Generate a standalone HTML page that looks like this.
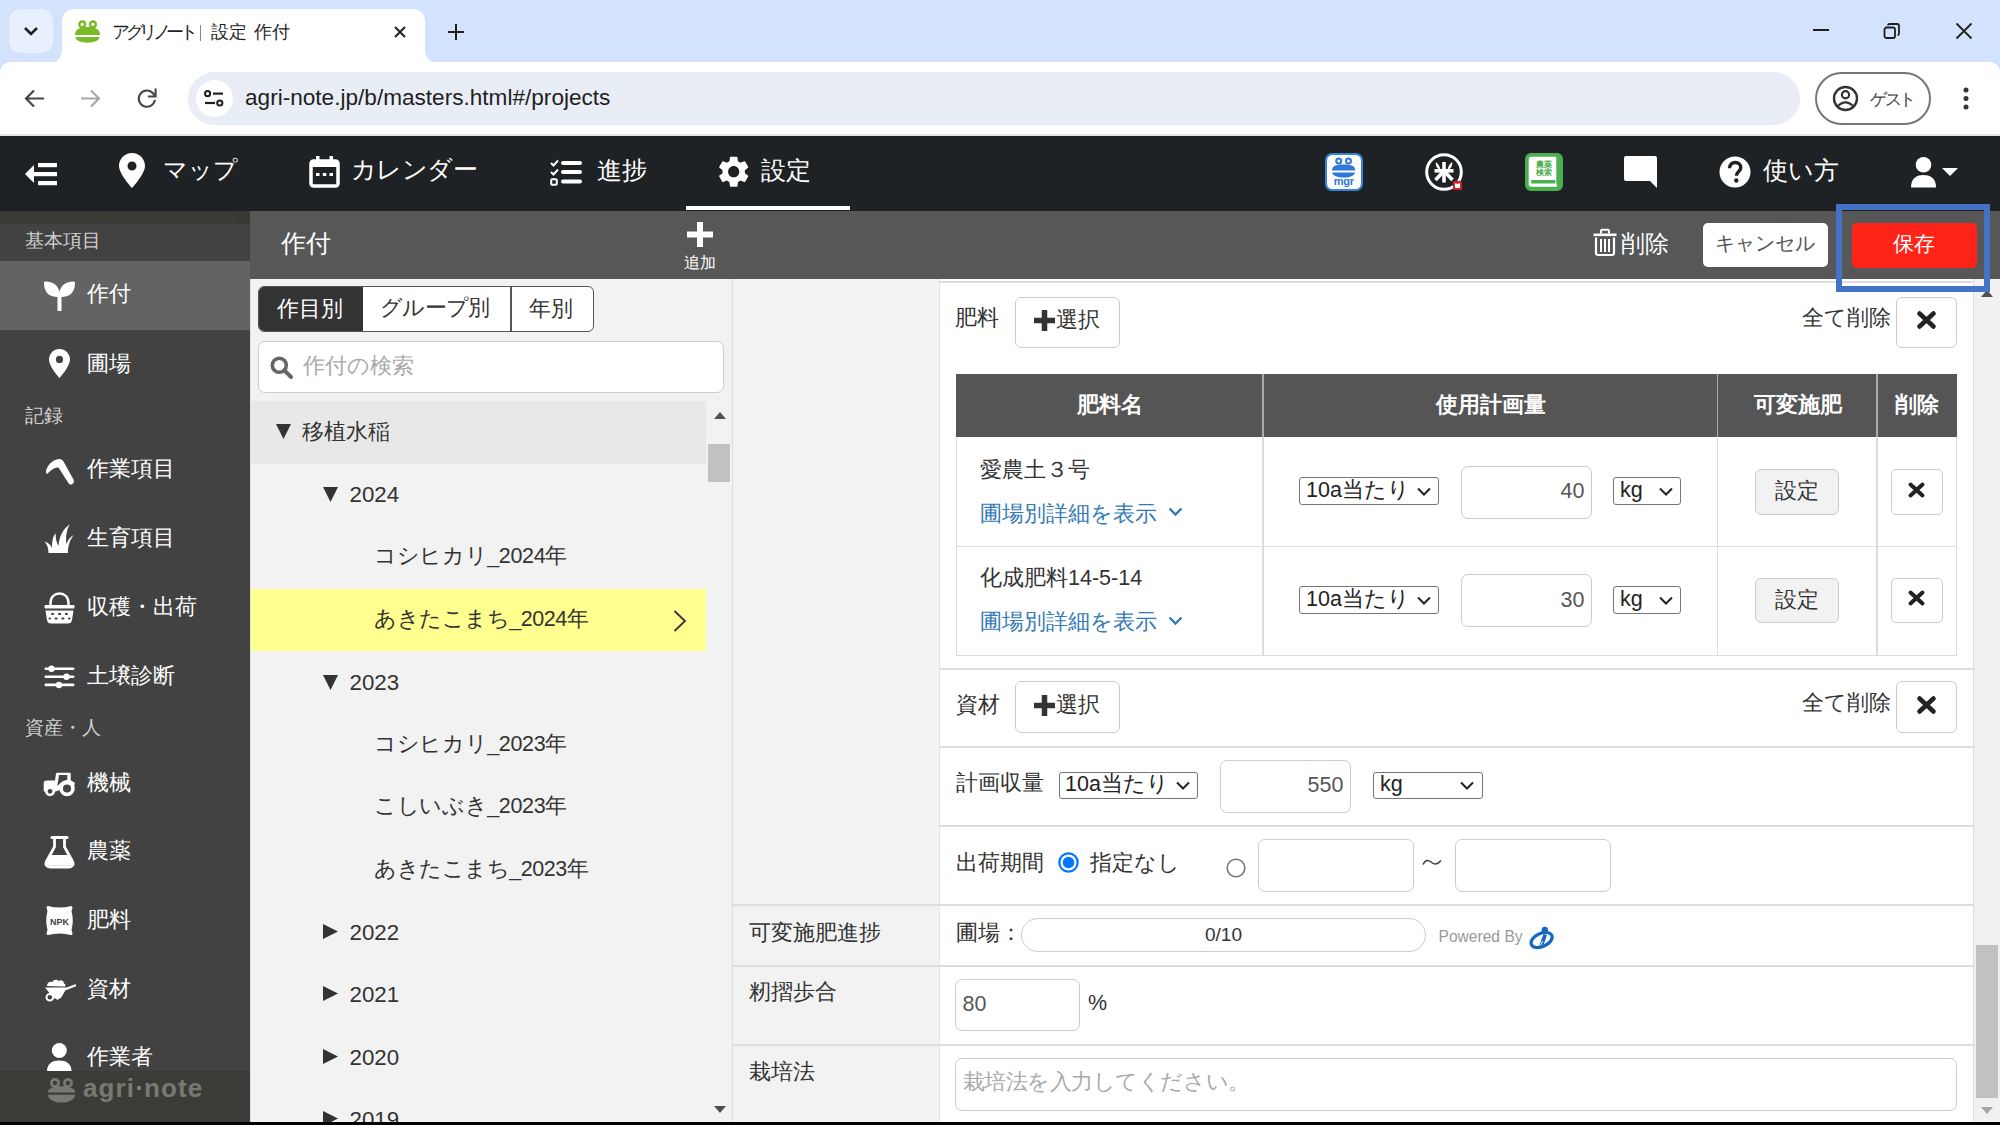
<!DOCTYPE html>
<html lang="ja">
<head>
<meta charset="utf-8">
<style>
*{box-sizing:border-box;margin:0;padding:0}
html,body{width:2000px;height:1125px;overflow:hidden;background:#000}
body{position:relative;font-family:"Liberation Sans",sans-serif;color:#333}
.a{position:absolute}
.t{position:absolute;white-space:nowrap;line-height:1}
svg{position:absolute;overflow:visible}
</style>
</head>
<body>
<!-- ===== CHROME TAB STRIP ===== -->
<div class="a" style="left:0;top:0;width:2000px;height:80px;background:#d3e3fd"></div>
<div class="a" style="left:9px;top:9px;width:44px;height:44px;border-radius:12px;background:#e8f0fd"></div>
<svg style="left:23px;top:25px" width="16" height="12" viewBox="0 0 16 12"><path d="M2 3 L8 9 L14 3" fill="none" stroke="#1f1f1f" stroke-width="2.6"/></svg>
<!-- active tab -->
<div class="a" style="left:62px;top:9px;width:363px;height:54px;background:#fff;border-radius:12px 12px 0 0"></div>
<div class="a" style="left:50px;top:51px;width:12px;height:12px;background:radial-gradient(circle at 0 0,#d3e3fd 11.5px,#fff 12px)"></div>
<div class="a" style="left:425px;top:51px;width:12px;height:12px;background:radial-gradient(circle at 100% 0,#d3e3fd 11.5px,#fff 12px)"></div>
<svg style="left:75px;top:20px" width="25" height="23" viewBox="0 0 25 23">
<circle cx="7.2" cy="4.4" r="2.85" fill="none" stroke="#7aba28" stroke-width="2.4"/>
<circle cx="17.9" cy="4.4" r="2.85" fill="none" stroke="#7aba28" stroke-width="2.4"/>
<path d="M0 14.9 C0 9.5 4 7 12.5 7 C21 7 25 9.5 25 14.9 Z" fill="#7aba28"/>
<path d="M0.3 17.1 L24.7 17.1 C24 21 19 22.7 12.5 22.7 C6 22.7 1 21 0.3 17.1Z" fill="#7aba28"/>
</svg>
<div class="t" style="left:112px;top:24px;font-size:17.5px;color:#1f1f1f;letter-spacing:-4.4px">アグリノート</div>
<div class="a" style="left:199.5px;top:25px;width:1.2px;height:16px;background:#888"></div>
<div class="t" style="left:210.5px;top:24px;font-size:17.5px;color:#1f1f1f">設定</div>
<div class="t" style="left:253.5px;top:24px;font-size:17.5px;color:#1f1f1f">作付</div>
<svg style="left:394px;top:26px" width="12" height="12" viewBox="0 0 12 12"><path d="M1 1L11 11M11 1L1 11" stroke="#1f1f1f" stroke-width="2"/></svg>
<svg style="left:448px;top:24px" width="16" height="16" viewBox="0 0 16 16"><path d="M8 0V16M0 8H16" stroke="#1f1f1f" stroke-width="2"/></svg>
<!-- window controls -->
<div class="a" style="left:1813px;top:29px;width:16px;height:2px;background:#1f1f1f"></div>
<svg style="left:1883px;top:23px" width="18" height="16" viewBox="0 0 18 16"><rect x="1.5" y="4.5" width="10.5" height="10.5" rx="2" fill="none" stroke="#1f1f1f" stroke-width="1.8"/><path d="M5 2.5 Q5 1 6.5 1 L14 1 Q16 1 16 3 L16 10.5 Q16 12 14.5 12" fill="none" stroke="#1f1f1f" stroke-width="1.8"/></svg>
<svg style="left:1956px;top:23px" width="16" height="16" viewBox="0 0 16 16"><path d="M0.5 0.5L15.5 15.5M15.5 0.5L0.5 15.5" stroke="#1f1f1f" stroke-width="1.8"/></svg>

<!-- ===== CHROME TOOLBAR ===== -->
<div class="a" style="left:0;top:62px;width:2000px;height:72px;background:#fff;border-radius:10px 10px 0 0"></div>
<div class="a" style="left:0;top:134px;width:2000px;height:2px;background:#e3e3e3"></div>
<svg style="left:24px;top:89px" width="21" height="19" viewBox="0 0 21 19"><path d="M20 9.5H2.5M10 1.5L2 9.5L10 17.5" fill="none" stroke="#474747" stroke-width="2.2"/></svg>
<svg style="left:80px;top:89px" width="21" height="19" viewBox="0 0 21 19"><path d="M1 9.5H18.5M11 1.5L19 9.5L11 17.5" fill="none" stroke="#a8a8a8" stroke-width="2.2"/></svg>
<svg style="left:137px;top:88px" width="21" height="21" viewBox="0 0 21 21"><path d="M17.9 11.9 A8.1 8.1 0 1 1 15.3 4.6 L18 7.8" fill="none" stroke="#474747" stroke-width="2.1"/><path d="M18.6 1.3 V8.5 H11.8" fill="none" stroke="#474747" stroke-width="2.1" stroke-linecap="round"/></svg>
<div class="a" style="left:188px;top:72px;width:1612px;height:53px;border-radius:27px;background:#e9eef6"></div>
<div class="a" style="left:196px;top:80px;width:37px;height:37px;border-radius:50%;background:#fff"></div>
<svg style="left:204px;top:90px" width="20" height="17" viewBox="0 0 20 17"><circle cx="3.6" cy="3.6" r="2.6" fill="none" stroke="#1f1f1f" stroke-width="2"/><path d="M9 3.6H19" stroke="#1f1f1f" stroke-width="2.2"/><path d="M1 13H11" stroke="#1f1f1f" stroke-width="2.2"/><circle cx="15.8" cy="13" r="2.6" fill="none" stroke="#1f1f1f" stroke-width="2"/></svg>
<div class="t" style="left:245px;top:87px;font-size:22.6px;color:#1f1f1f;letter-spacing:0px" id="url">agri-note.jp/b/masters.html#/projects</div>
<div class="a" style="left:1815px;top:72px;width:116px;height:53px;border-radius:27px;border:2px solid #747775"></div>
<svg style="left:1832px;top:85px" width="27" height="27" viewBox="0 0 27 27"><circle cx="13.5" cy="13.5" r="11.5" fill="none" stroke="#333" stroke-width="2.4"/><circle cx="13.5" cy="9.8" r="3.6" fill="none" stroke="#333" stroke-width="2.2"/><path d="M5.5 21.5 Q13.5 13.5 21.5 21.5" fill="none" stroke="#333" stroke-width="2.2"/></svg>
<div class="t" style="left:1870px;top:91px;font-size:17px;color:#444;letter-spacing:-2.5px">ゲスト</div>
<svg style="left:1963px;top:87px" width="6" height="23" viewBox="0 0 6 23"><circle cx="3" cy="3" r="2.5" fill="#333"/><circle cx="3" cy="11.5" r="2.5" fill="#333"/><circle cx="3" cy="20" r="2.5" fill="#333"/></svg>

<!-- ===== APP HEADER ===== -->
<div class="a" style="left:0;top:136px;width:2000px;height:75px;background:#1f2225"></div>

<svg style="left:25px;top:161px" width="33" height="26" viewBox="0 0 33 26">
<path d="M0 13 L9 4 L9 22 Z" fill="#fff"/>
<rect x="8" y="11" width="24" height="4.2" fill="#fff"/>
<rect x="13" y="2" width="19" height="4.2" fill="#fff"/>
<rect x="13" y="20" width="19" height="4.2" fill="#fff"/>
</svg>
<svg style="left:119px;top:153px" width="26" height="35" viewBox="0 0 26 35"><path d="M13 0C5.8 0 0 5.8 0 13C0 21 13 35 13 35C13 35 26 21 26 13C26 5.8 20.2 0 13 0ZM13 17.5A4.5 4.5 0 1 1 13 8.5A4.5 4.5 0 1 1 13 17.5Z" fill="#fff"/></svg>
<div class="t" style="left:163px;top:158px;font-size:24px;color:#fff">マップ</div>
<svg style="left:309px;top:156px" width="31" height="32" viewBox="0 0 31 32"><rect x="2" y="5" width="27" height="25" rx="2.5" fill="none" stroke="#fff" stroke-width="3.5"/><rect x="2" y="5" width="27" height="6" fill="#fff"/><rect x="7" y="0" width="3.5" height="7" fill="#fff"/><rect x="20.5" y="0" width="3.5" height="7" fill="#fff"/><rect x="7" y="17" width="3.5" height="3" fill="#fff"/><rect x="13.8" y="17" width="3.5" height="3" fill="#fff"/><rect x="20.5" y="17" width="3.5" height="3" fill="#fff"/></svg>
<div class="t" style="left:351px;top:157.5px;font-size:24.6px;letter-spacing:-0.6px;color:#fff">カレンダー</div>
<svg style="left:550px;top:159px" width="32" height="27" viewBox="0 0 32 27"><path d="M1 4 L3.5 6.5 L8 1.5" fill="none" stroke="#fff" stroke-width="2"/><path d="M1 13 L3.5 15.5 L8 10.5" fill="none" stroke="#fff" stroke-width="2"/><rect x="1.2" y="20.2" width="5.6" height="5.6" rx="1" fill="none" stroke="#fff" stroke-width="2"/><rect x="11" y="2" width="21" height="4" rx="2" fill="#fff"/><rect x="11" y="11" width="21" height="4" rx="2" fill="#fff"/><rect x="11" y="20.5" width="21" height="4" rx="2" fill="#fff"/></svg>
<div class="t" style="left:597px;top:158px;font-size:25px;color:#fff">進捗</div>
<svg style="left:714.8px;top:153px" width="37.4" height="37.4" viewBox="0 0 24 24"><path fill="#fff" d="M19.14 12.94c.04-.3.06-.61.06-.94 0-.32-.02-.64-.07-.94l2.03-1.58a.49.49 0 0 0 .12-.61l-1.92-3.32a.488.488 0 0 0-.59-.22l-2.39.96c-.5-.38-1.03-.7-1.62-.94l-.36-2.54a.484.484 0 0 0-.48-.41h-3.84c-.24 0-.43.17-.47.41l-.36 2.54c-.59.24-1.13.57-1.62.94l-2.39-.96c-.22-.08-.47 0-.59.22L2.74 8.87c-.12.21-.08.47.12.61l2.03 1.58c-.05.3-.09.63-.09.94s.02.64.07.94l-2.03 1.58a.49.49 0 0 0-.12.61l1.92 3.32c.12.22.37.29.59.22l2.39-.96c.5.38 1.03.7 1.62.94l.36 2.54c.05.24.24.41.48.41h3.84c.24 0 .44-.17.47-.41l.36-2.54c.59-.24 1.13-.56 1.62-.94l2.39.96c.22.08.47 0 .59-.22l1.92-3.32c.12-.22.07-.47-.12-.61l-2.01-1.58zM12 15.6c-1.98 0-3.6-1.62-3.6-3.6s1.62-3.6 3.6-3.6 3.6 1.62 3.6 3.6-1.62 3.6-3.6 3.6z"/></svg>
<div class="t" style="left:761px;top:158px;font-size:25px;color:#fff">設定</div>
<div class="a" style="left:686px;top:206px;width:164px;height:4px;background:#fff"></div>
<!-- mgr icon -->
<div class="a" style="left:1325px;top:153px;width:38px;height:38px;border-radius:7px;background:#3484dc"></div>
<div class="a" style="left:1327px;top:155px;width:34px;height:34px;border-radius:5.5px;background:#fff"></div>
<svg style="left:1325px;top:153px" width="38" height="38" viewBox="0 0 38 38">
<circle cx="13.75" cy="8.1" r="2.5" fill="none" stroke="#2f78d6" stroke-width="2"/>
<circle cx="23.5" cy="8.1" r="2.5" fill="none" stroke="#2f78d6" stroke-width="2"/>
<path d="M7 17.5 C7 13 11 11.5 18.6 11.5 C26.2 11.5 30.3 13 30.3 17.5 Z" fill="#2f78d6"/>
<path d="M7.3 19.6 L30 19.6 C29.5 23 25 24.6 18.6 24.6 C12.2 24.6 7.8 23 7.3 19.6Z" fill="#2f78d6"/>
<text x="18.8" y="32.3" text-anchor="middle" font-family="Liberation Sans" font-weight="bold" font-size="11" fill="#2f78d6" letter-spacing="-0.3">mgr</text>
</svg>
<!-- rice icon -->
<svg style="left:1425px;top:153px" width="40" height="40" viewBox="0 0 40 40">
<circle cx="19" cy="19" r="17.3" fill="none" stroke="#fff" stroke-width="3"/>
<path d="M19 9V29.5" stroke="#fff" stroke-width="3.6"/>
<path d="M9.5 17.8H28.5" stroke="#fff" stroke-width="3.6"/>
<path d="M17.5 19.5L10.5 27M20.5 19.5L27.5 27" stroke="#fff" stroke-width="3.6"/>
<path d="M11.5 10.5 Q14 12.5 14.5 15.5 Q11.5 14 11.5 10.5Z M26.5 10.5 Q24 12.5 23.5 15.5 Q26.5 14 26.5 10.5Z" fill="#fff" stroke="#fff" stroke-width="1.5"/>
<rect x="28" y="28" width="9" height="9" rx="1.2" fill="#d0202a"/>
<path d="M30 31 Q30 30 31 30 Q31.5 31 32.5 31 Q33.5 31 34 30 Q35 30 35 31 V34 Q35 35 34 35 H31 Q30 35 30 34Z" fill="#fff"/>
</svg>
<!-- book icon -->
<div class="a" style="left:1525px;top:153px;width:38px;height:38px;border-radius:6px;background:#4caf50"></div>
<svg style="left:1525px;top:153px" width="38" height="38" viewBox="0 0 38 38">
<path d="M6 3.7 H30.5 L31.3 4.5 V29.5 L32 33.8 H6.5 Q3.7 33.8 3.7 31 V6 Q3.7 3.7 6 3.7Z" fill="#fff"/>
<rect x="6" y="26.9" width="24.5" height="3.7" rx="1" fill="#4caf50"/>
<text x="18.5" y="13.8" text-anchor="middle" font-size="8.2" fill="#4caf50" font-weight="bold">農薬</text>
<text x="18.5" y="22" text-anchor="middle" font-size="8.2" fill="#4caf50" font-weight="bold">検索</text>
</svg>
<!-- chat -->
<svg style="left:1624px;top:156px" width="33" height="32" viewBox="0 0 33 32"><path d="M2 0 H31 Q33 0 33 2 V32 L26 25 H2 Q0 25 0 23 V2 Q0 0 2 0Z" fill="#fff"/></svg>
<!-- help -->
<svg style="left:1719px;top:156px" width="32" height="32" viewBox="0 0 32 32"><circle cx="16" cy="16" r="15.5" fill="#fff"/><path d="M10.5 12.2 C10.5 8.5 13 6.5 16.2 6.5 C19.5 6.5 21.8 8.7 21.8 11.6 C21.8 15.5 17.5 15.6 17.5 19.8" fill="none" stroke="#1f2225" stroke-width="3.4"/><circle cx="17.3" cy="24.5" r="2.2" fill="#1f2225"/></svg>
<div class="t" style="left:1763px;top:159px;font-size:24.5px;color:#fff">使い方</div>
<svg style="left:1911px;top:157px" width="48" height="31" viewBox="0 0 48 31"><circle cx="12.5" cy="7.8" r="7.8" fill="#fff"/><path d="M0 30.5 C0 21 6 18 12.5 18 C19 18 25 21 25 30.5Z" fill="#fff"/><path d="M31 11 H47 L39 19Z" fill="#fff"/></svg>

<!-- ===== SUB HEADER ===== -->
<div class="a" style="left:250px;top:211px;width:1750px;height:68px;background:#575757"></div>
<div class="t" style="left:281px;top:231px;font-size:25px;color:#fff">作付</div>
<svg style="left:687px;top:222px" width="26" height="25" viewBox="0 0 26 25"><path d="M13 0V25M0 12.5H26" stroke="#fff" stroke-width="6"/></svg>
<div class="t" style="left:684px;top:255px;font-size:16px;color:#fff">追加</div>
<svg style="left:1593px;top:229px" width="24" height="27" viewBox="0 0 24 27"><path d="M8 4.5 V2 Q8 0.8 9.2 0.8 H14.8 Q16 0.8 16 2 V4.5" fill="none" stroke="#fff" stroke-width="2"/><rect x="0.5" y="4.5" width="23" height="2.6" fill="#fff"/><path d="M3 8.5 V24 Q3 26 5 26 H19 Q21 26 21 24 V8.5" fill="none" stroke="#fff" stroke-width="2.2"/><path d="M8 10V23M12 10V23M16 10V23" stroke="#fff" stroke-width="2"/></svg>
<div class="t" style="left:1621px;top:232.5px;font-size:23.5px;color:#fff">削除</div>
<div class="a" style="left:1703px;top:223px;width:125px;height:44px;border-radius:5px;background:#fff"></div>
<div class="t" style="left:1715px;top:234px;font-size:19.5px;color:#555">キャンセル</div>
<div class="a" style="left:1852px;top:223px;width:125px;height:45px;border-radius:5px;background:#ff2318"></div>
<div class="t" style="left:1893px;top:233px;font-size:21px;color:#fff">保存</div>

<!-- ===== SIDEBAR ===== -->
<div class="a" style="left:0;top:211px;width:250px;height:13px;background:#393b35"></div>
<div class="a" style="left:237px;top:211px;width:13px;height:13px;background:#363831"></div>
<div class="a" style="left:0;top:224px;width:250px;height:847px;background:#424242"></div>
<div class="a" style="left:0;top:261px;width:250px;height:69px;background:#636363"></div>
<div class="t" style="left:25px;top:231.8px;font-size:18.5px;color:#d0d0d0">基本項目</div>
<svg style="left:43px;top:280px" width="33" height="31" viewBox="0 0 33 31"><path d="M14.5 31 V17 C8 17 1 14 1 3 C1 2 1.5 1.5 2.5 1.5 C10 1.5 15 5 16.5 12 C18 5 23 1.5 30.5 1.5 C31.5 1.5 32 2 32 3 C32 14 25 17 18.5 17 V31Z" fill="#fff"/></svg>
<div class="t" style="left:87px;top:283.0px;font-size:22px;color:#fff">作付</div>
<svg style="left:49px;top:348.5px" width="21" height="29" viewBox="0 0 21 29"><path d="M10.5 0C4.7 0 0 4.7 0 10.5C0 17.5 10.5 29 10.5 29C10.5 29 21 17.5 21 10.5C21 4.7 16.3 0 10.5 0ZM10.5 14A3.6 3.6 0 1 1 10.5 6.8A3.6 3.6 0 1 1 10.5 14Z" fill="#fff"/></svg>
<div class="t" style="left:87px;top:352.5px;font-size:22px;color:#fff">圃場</div>
<div class="t" style="left:25px;top:406.5px;font-size:18.5px;color:#d0d0d0">記録</div>
<svg style="left:45px;top:458px" width="30" height="28" viewBox="0 0 30 28"><path d="M1 13.5 C2 7 8 1.5 14 1 C16 0.8 17.5 2 18.5 3.5 L28.5 21.5 C29.5 23.5 28.5 26 26.5 26.5 C25 26.8 24 26 23.2 24.8 L14.5 11 C13.7 9.8 12.5 9.3 11 9.8 C7.5 11 4.5 13.5 2.5 15.5 C1.5 16.3 0.8 15 1 13.5Z" fill="#fff"/></svg>
<div class="t" style="left:87px;top:458.3px;font-size:22px;color:#fff">作業項目</div>
<svg style="left:45px;top:524px" width="30" height="30" viewBox="0 0 30 30"><path d="M3.5 29 C3.5 24 2 20 -0.5 17.5 C3 18.5 6 21 7 24 C7 17 8 12 10.6 9.6 C10.5 14 11.5 19 13.5 22 C14 13 18 5 24.8 0.3 C21.5 6 20.5 13 21.5 20 C23 15.5 25.5 12.5 28.7 11 C25.5 15 23 21 22.8 29 Z" fill="#fff"/></svg>
<div class="t" style="left:87px;top:527.2px;font-size:22px;color:#fff">生育項目</div>
<svg style="left:44px;top:592px" width="31" height="32" viewBox="0 0 31 32"><path d="M6.5 14 V11 C6.5 5 10.5 1.5 15.5 1.5 C20.5 1.5 24.5 5 24.5 11 V14" fill="none" stroke="#fff" stroke-width="2.4"/><rect x="0.5" y="13" width="30" height="3.4" rx="1" fill="#fff"/><path d="M1.5 18.5 H29.5 L28 28 C27.7 30.5 26 31.5 24 31.5 H7 C5 31.5 3.3 30.5 3 28Z" fill="#fff"/><g fill="#424242"><rect x="7" y="21" width="3.2" height="2" rx="1"/><rect x="13.9" y="21" width="3.2" height="2" rx="1"/><rect x="20.8" y="21" width="3.2" height="2" rx="1"/><rect x="10.5" y="25.5" width="3.2" height="2" rx="1"/><rect x="17.3" y="25.5" width="3.2" height="2" rx="1"/><rect x="4.5" y="25.5" width="2.5" height="2" rx="1"/><rect x="24" y="25.5" width="2.5" height="2" rx="1"/></g></svg>
<div class="t" style="left:87px;top:595.5px;font-size:22px;color:#fff">収穫・出荷</div>
<svg style="left:44px;top:665px" width="31" height="25" viewBox="0 0 31 25"><g fill="#fff"><rect x="0.5" y="2.5" width="30" height="2.6" rx="1.3"/><rect x="0.5" y="10.5" width="30" height="2.6" rx="1.3"/><rect x="0.5" y="18.6" width="30" height="2.6" rx="1.3"/><circle cx="7.5" cy="3.8" r="3.2"/><circle cx="22.5" cy="11.8" r="3.2"/><circle cx="15" cy="20" r="3.2"/></g></svg>
<div class="t" style="left:87px;top:664.5px;font-size:22px;color:#fff">土壌診断</div>
<div class="t" style="left:25px;top:719.3px;font-size:18.5px;color:#d0d0d0">資産・人</div>
<svg style="left:40px;top:768px" width="36" height="30" viewBox="0 0 36 30"><path d="M3.7 15 Q3.7 12.5 6.5 12.5 H15 L16 5.5 Q16.2 4.8 17 4.8 H29.8 Q30.7 4.8 30.7 5.8 V12.3 L34.8 14.8 V16.8 L31 17.5 L20 22 L15.5 23.6 H3.7Z" fill="#fff"/><path d="M19 7.1 H27.3 V11.7 Q22 12.5 18.5 17 L17.3 17.8Z" fill="#424242"/><circle cx="27" cy="20.5" r="5.9" fill="#424242" stroke="#fff" stroke-width="3.7"/><circle cx="10" cy="23.3" r="3.7" fill="#424242" stroke="#fff" stroke-width="2.6"/></svg>
<div class="t" style="left:87px;top:772.2px;font-size:22px;color:#fff">機械</div>
<svg style="left:45px;top:836px" width="29" height="31" viewBox="0 0 29 31"><path d="M7 1.5 H22" stroke="#fff" stroke-width="3" stroke-linecap="round"/><path d="M9.5 2 V11 L1.5 25.5 C0 28.5 1.5 31 5 31 H24 C27.5 31 29 28.5 27.5 25.5 L19.5 11 V2" fill="none" stroke="#fff" stroke-width="2.8"/><path d="M6.2 19 H22.8 L27 26 C28 28.5 27 29.7 24.5 29.7 H4.5 C2 29.7 1 28.5 2 26Z" fill="#fff"/></svg>
<div class="t" style="left:87px;top:840.2px;font-size:22px;color:#fff">農薬</div>
<svg style="left:45px;top:905px" width="29" height="31" viewBox="0 0 29 31"><path d="M3 1 Q14.5 4 26 1 Q27.5 1 27.5 2.5 Q27 5 26.5 6 Q29 15.5 26.5 25 Q27 26 27.5 28.5 Q27.5 30 26 30 Q14.5 27 3 30 Q1.5 30 1.5 28.5 Q2 26 2.5 25 Q0 15.5 2.5 6 Q2 5 1.5 2.5 Q1.5 1 3 1Z" fill="#fff"/><text x="14.5" y="19.5" text-anchor="middle" font-family="Liberation Sans" font-weight="bold" font-size="9" fill="#424242">NPK</text></svg>
<div class="t" style="left:87px;top:909.3px;font-size:22px;color:#fff">肥料</div>
<svg style="left:44px;top:977px" width="32" height="25" viewBox="0 0 32 25"><path d="M3 9 C3 5.5 6 4 8.5 5 C9.5 2.5 13 2 14.5 4 C16.5 2.5 20 3.5 20 6.5 C21.5 7 22 8.5 21 9.5Z" fill="#fff"/><path d="M1 10.5 H23 L17.5 20 C16.8 21 16 21.5 15 21.5 H10 Z" fill="#fff"/><path d="M22 12 L31 8.5" stroke="#fff" stroke-width="2.4" stroke-linecap="round"/><path d="M10 14 L14 22.5" stroke="#fff" stroke-width="2.4"/><circle cx="5.8" cy="20.2" r="3.3" fill="none" stroke="#fff" stroke-width="2"/></svg>
<div class="t" style="left:87px;top:978.1px;font-size:22px;color:#fff">資材</div>
<svg style="left:46.5px;top:1043px" width="25" height="28" viewBox="0 0 25 28"><circle cx="12.3" cy="7.5" r="7.5" fill="#fff"/><path d="M0 28 C0 20.5 5.5 17.5 12.3 17.5 C19 17.5 24.5 20.5 24.5 28Z" fill="#fff"/></svg>
<div class="t" style="left:87px;top:1045.5px;font-size:22px;color:#fff">作業者</div>
<div class="a" style="left:0;top:1071px;width:250px;height:51px;background:#3a3c37"></div>
<svg style="left:46.5px;top:1077.5px" width="29" height="25" viewBox="0 0 29 25">
<circle cx="8" cy="5" r="3.6" fill="none" stroke="#777a73" stroke-width="2.8"/>
<circle cx="21" cy="5" r="3.6" fill="none" stroke="#777a73" stroke-width="2.8"/>
<path d="M0.5 14.5 C0.5 6 28.5 6 28.5 14.5 Z" fill="#777a73"/>
<path d="M0.8 16.7 L28.2 16.7 C27.5 22.5 21 24.5 14.5 24.5 C8 24.5 1.5 22.5 0.8 16.7Z" fill="#777a73"/>
</svg>
<div class="t" style="left:83px;top:1074.5px;font-size:26px;font-weight:bold;color:#777a73;letter-spacing:1.1px">agri<span style="display:inline-block;width:4px;height:4px;background:#777a73;margin:0 3px 0 2px;position:relative;top:-7px"></span>note</div>

<!-- ===== TREE PANEL ===== -->
<div class="a" style="left:250px;top:279px;width:483px;height:843px;background:#f2f2f2;border-left:1px solid #e0e0e0;border-right:1px solid #ddd"></div>
<div class="a" style="left:258px;top:286px;width:336px;height:46px;border:1.5px solid #555;border-radius:6px;background:#fff;overflow:hidden">
 <div class="a" style="left:0;top:0;width:104px;height:44px;background:#333"></div>
 <div class="a" style="left:251px;top:0;width:1.5px;height:44px;background:#555"></div>
</div>
<div class="t" style="left:277px;top:297.5px;font-size:22px;color:#fff">作目別</div>
<div class="t" style="left:380px;top:298px;font-size:21.5px;color:#333;letter-spacing:-0.7px">グループ別</div>
<div class="t" style="left:529px;top:297.5px;font-size:22px;color:#333">年別</div>
<div class="a" style="left:258px;top:341px;width:466px;height:52px;border:1.2px solid #ccc;border-radius:7px;background:#fff"></div>
<svg style="left:270px;top:356px" width="23" height="23" viewBox="0 0 23 23"><circle cx="9.3" cy="9.3" r="7" fill="none" stroke="#666" stroke-width="3.6"/><path d="M14.5 14.5 L21 21" stroke="#666" stroke-width="4" stroke-linecap="round"/></svg>
<div class="t" style="left:302.5px;top:354.5px;font-size:21.7px;color:#aaa">作付の検索</div>
<div class="a" style="left:251px;top:401px;width:455px;height:62.5px;background:#e8e8e8"></div>
<div class="a" style="left:251px;top:588.5px;width:455px;height:62.5px;background:#ffff8f"></div>
<svg style="left:276px;top:424px" width="15" height="15" viewBox="0 0 15 15"><path d="M0 0H15L7.5 15Z" fill="#333"/></svg>
<div class="t" style="left:302px;top:420.5px;font-size:22px;color:#333">移植水稲</div>
<svg style="left:323px;top:487px" width="15" height="15" viewBox="0 0 15 15"><path d="M0 0H15L7.5 15Z" fill="#333"/></svg>
<div class="t" style="left:349.5px;top:484.3px;font-size:22.3px;color:#333">2024</div>
<div class="t" style="left:374px;top:546.2px;font-size:21.5px;color:#333;letter-spacing:-0.35px">コシヒカリ_2024年</div>
<div class="t" style="left:374px;top:608.7px;font-size:21.5px;color:#333;letter-spacing:-0.45px">あきたこまち_2024年</div>
<svg style="left:673px;top:610px" width="14" height="22" viewBox="0 0 14 22"><path d="M1.5 1 L12 11 L1.5 21" fill="none" stroke="#333" stroke-width="1.8"/></svg>
<svg style="left:323px;top:674.5px" width="15" height="15" viewBox="0 0 15 15"><path d="M0 0H15L7.5 15Z" fill="#333"/></svg>
<div class="t" style="left:349.5px;top:671.8px;font-size:22.3px;color:#333">2023</div>
<div class="t" style="left:374px;top:733.7px;font-size:21.5px;color:#333;letter-spacing:-0.35px">コシヒカリ_2023年</div>
<div class="t" style="left:374px;top:796.2px;font-size:21.5px;color:#333;letter-spacing:-0.35px">こしいぶき_2023年</div>
<div class="t" style="left:374px;top:858.7px;font-size:21.5px;color:#333;letter-spacing:-0.45px">あきたこまち_2023年</div>
<svg style="left:322.5px;top:923.5px" width="15" height="15" viewBox="0 0 15 15"><path d="M0 0V15L15 7.5Z" fill="#333"/></svg>
<div class="t" style="left:349.5px;top:921.8px;font-size:22.3px;color:#333">2022</div>
<svg style="left:322.5px;top:986.0px" width="15" height="15" viewBox="0 0 15 15"><path d="M0 0V15L15 7.5Z" fill="#333"/></svg>
<div class="t" style="left:349.5px;top:984.3px;font-size:22.3px;color:#333">2021</div>
<svg style="left:322.5px;top:1048.5px" width="15" height="15" viewBox="0 0 15 15"><path d="M0 0V15L15 7.5Z" fill="#333"/></svg>
<div class="t" style="left:349.5px;top:1046.8px;font-size:22.3px;color:#333">2020</div>
<svg style="left:322.5px;top:1111.0px" width="15" height="15" viewBox="0 0 15 15"><path d="M0 0V15L15 7.5Z" fill="#333"/></svg>
<div class="t" style="left:349.5px;top:1109.3px;font-size:22.3px;color:#333">2019</div>
<svg style="left:714px;top:412px" width="12" height="7" viewBox="0 0 12 7"><path d="M0 7H12L6 0Z" fill="#505050"/></svg>
<div class="a" style="left:708px;top:444px;width:22px;height:37.5px;background:#c1c1c1"></div>
<svg style="left:714px;top:1106px" width="12" height="7" viewBox="0 0 12 7"><path d="M0 0H12L6 7Z" fill="#505050"/></svg>

<!-- ===== CONTENT ===== -->
<div class="a" style="left:733px;top:279px;width:207px;height:843px;background:#f2f2f2;border-right:1px solid #e3e3e3"></div>
<div class="a" style="left:940px;top:279px;width:1034px;height:843px;background:#fff"></div>
<div class="a" style="left:940px;top:281px;width:1033px;height:1.5px;background:#ddd"></div>
<div class="a" style="left:1973px;top:279px;width:1px;height:843px;background:#ddd"></div>
<div class="a" style="left:1974px;top:279px;width:26px;height:843px;background:#f1f1f1"></div>
<svg style="left:1981px;top:290px" width="12" height="7" viewBox="0 0 12 7"><path d="M0 7H12L6 0Z" fill="#505050"/></svg>
<div class="a" style="left:1976px;top:945px;width:22px;height:153px;background:#c1c1c1"></div>
<svg style="left:1981px;top:1107px" width="12" height="7" viewBox="0 0 12 7"><path d="M0 0H12L6 7Z" fill="#a3a3a3"/></svg>
<!-- dividers -->
<div class="a" style="left:940px;top:668px;width:1033px;height:1.5px;background:#ddd"></div>
<div class="a" style="left:940px;top:746px;width:1033px;height:1.5px;background:#ddd"></div>
<div class="a" style="left:940px;top:825px;width:1033px;height:1.5px;background:#ddd"></div>
<div class="a" style="left:733px;top:904px;width:1240px;height:1.5px;background:#ddd"></div>
<div class="a" style="left:733px;top:965px;width:1240px;height:1.5px;background:#ddd"></div>
<div class="a" style="left:733px;top:1044px;width:1240px;height:1.5px;background:#ddd"></div>

<!-- 肥料 section -->
<div class="t" style="left:955px;top:308px;font-size:21.5px;color:#333">肥料</div>
<div class="a btn" style="left:1015px;top:296.5px;width:105px;height:51px;border:1.2px solid #ccc;border-radius:6px;background:#fff"></div>
<svg style="left:1034px;top:310px" width="21" height="21" viewBox="0 0 21 21"><path d="M10.5 0V21M0 10.5H21" stroke="#333" stroke-width="5.5"/></svg>
<div class="t" style="left:1056px;top:310px;font-size:21.5px;color:#333">選択</div>
<div class="t" style="left:1802px;top:308px;font-size:21.5px;color:#333">全て削除</div>
<div class="a" style="left:1896px;top:296.5px;width:61px;height:51px;border:1.2px solid #ccc;border-radius:6px;background:#fff"></div>
<svg style="left:1917px;top:311px" width="19" height="18" viewBox="0 0 19 18"><path d="M2.5 2.5L16.5 15.5M16.5 2.5L2.5 15.5" stroke="#222" stroke-width="4.6" stroke-linecap="round"/></svg>

<!-- table -->
<div class="a" style="left:955.5px;top:373.5px;width:1001.5px;height:63px;background:#555"></div>
<div class="a" style="left:1262px;top:373.5px;width:1.5px;height:63px;background:#aaa"></div>
<div class="a" style="left:1716.5px;top:373.5px;width:1.5px;height:63px;background:#aaa"></div>
<div class="a" style="left:1876px;top:373.5px;width:1.5px;height:63px;background:#aaa"></div>
<div class="t" style="left:1077px;top:394.5px;font-size:21.5px;font-weight:bold;color:#fff">肥料名</div>
<div class="t" style="left:1436px;top:394.5px;font-size:21.5px;font-weight:bold;color:#fff">使用計画量</div>
<div class="t" style="left:1754px;top:394.5px;font-size:21.5px;font-weight:bold;color:#fff">可変施肥</div>
<div class="t" style="left:1895px;top:394.5px;font-size:21.5px;font-weight:bold;color:#fff">削除</div>
<div class="a" style="left:955.5px;top:436.5px;width:1001.5px;height:219px;border:1.5px solid #ddd;border-top:none"></div>
<div class="a" style="left:955.5px;top:545.5px;width:1001.5px;height:1.5px;background:#ddd"></div>
<div class="a" style="left:1262px;top:436.5px;width:1.5px;height:219px;background:#ddd"></div>
<div class="a" style="left:1716.5px;top:436.5px;width:1.5px;height:219px;background:#ddd"></div>
<div class="a" style="left:1876px;top:436.5px;width:1.5px;height:219px;background:#ddd"></div>

<div class="t" style="left:980px;top:459.5px;font-size:21.5px;color:#333">愛農土３号</div>
<div class="t" style="left:980px;top:504px;font-size:21.5px;color:#337ab7">圃場別詳細を表示</div>
<svg style="left:1168px;top:507px" width="15" height="10" viewBox="0 0 15 10"><path d="M1.5 1.5L7.5 7.5L13.5 1.5" fill="none" stroke="#337ab7" stroke-width="2.4"/></svg>
<div class="a" style="left:1299px;top:477px;width:139.5px;height:28px;border:1px solid #767676;border-radius:3px;background:#fff"></div>
<div class="t" style="left:1306px;top:480px;font-size:21.5px;color:#222">10a当たり</div>
<svg style="left:1417px;top:487px" width="14" height="9" viewBox="0 0 14 9"><path d="M1 1.5L7 7.5L13 1.5" fill="none" stroke="#222" stroke-width="2"/></svg>
<div class="a" style="left:1460.5px;top:465.5px;width:131px;height:53px;border:1.2px solid #ccc;border-radius:7px;background:#fff"></div>
<div class="a" style="left:1613px;top:477px;width:68px;height:28px;border:1px solid #767676;border-radius:3px;background:#fff"></div>
<div class="t" style="left:1620px;top:480px;font-size:21.5px;color:#222">kg</div>
<svg style="left:1659px;top:487px" width="14" height="9" viewBox="0 0 14 9"><path d="M1 1.5L7 7.5L13 1.5" fill="none" stroke="#222" stroke-width="2"/></svg>
<div class="a" style="left:1755px;top:469px;width:83.5px;height:45.5px;border:1.2px solid #ccc;border-radius:6px;background:#f2f2f2"></div>
<div class="t" style="left:1775px;top:481px;font-size:21.5px;color:#333">設定</div>
<div class="a" style="left:1891px;top:469px;width:51.5px;height:45.5px;border:1.2px solid #ccc;border-radius:5px;background:#fff"></div>
<svg style="left:1908px;top:481.5px" width="17" height="16" viewBox="0 0 17 16"><path d="M2.5 2.5L14.5 13.5M14.5 2.5L2.5 13.5" stroke="#222" stroke-width="4" stroke-linecap="round"/></svg>
<div class="t" style="left:1560.5px;top:481px;font-size:21.5px;color:#555">40</div>

<div class="t" style="left:980px;top:568px;font-size:21.5px;color:#333">化成肥料14-5-14</div>
<div class="t" style="left:980px;top:611.5px;font-size:21.5px;color:#337ab7">圃場別詳細を表示</div>
<svg style="left:1168px;top:615.5px" width="15" height="10" viewBox="0 0 15 10"><path d="M1.5 1.5L7.5 7.5L13.5 1.5" fill="none" stroke="#337ab7" stroke-width="2.4"/></svg>
<div class="a" style="left:1299px;top:585.5px;width:139.5px;height:28px;border:1px solid #767676;border-radius:3px;background:#fff"></div>
<div class="t" style="left:1306px;top:588.5px;font-size:21.5px;color:#222">10a当たり</div>
<svg style="left:1417px;top:595.5px" width="14" height="9" viewBox="0 0 14 9"><path d="M1 1.5L7 7.5L13 1.5" fill="none" stroke="#222" stroke-width="2"/></svg>
<div class="a" style="left:1460.5px;top:574.0px;width:131px;height:53px;border:1.2px solid #ccc;border-radius:7px;background:#fff"></div>
<div class="a" style="left:1613px;top:585.5px;width:68px;height:28px;border:1px solid #767676;border-radius:3px;background:#fff"></div>
<div class="t" style="left:1620px;top:588.5px;font-size:21.5px;color:#222">kg</div>
<svg style="left:1659px;top:595.5px" width="14" height="9" viewBox="0 0 14 9"><path d="M1 1.5L7 7.5L13 1.5" fill="none" stroke="#222" stroke-width="2"/></svg>
<div class="a" style="left:1755px;top:577.5px;width:83.5px;height:45.5px;border:1.2px solid #ccc;border-radius:6px;background:#f2f2f2"></div>
<div class="t" style="left:1775px;top:589.5px;font-size:21.5px;color:#333">設定</div>
<div class="a" style="left:1891px;top:577.5px;width:51.5px;height:45.5px;border:1.2px solid #ccc;border-radius:5px;background:#fff"></div>
<svg style="left:1908px;top:590.0px" width="17" height="16" viewBox="0 0 17 16"><path d="M2.5 2.5L14.5 13.5M14.5 2.5L2.5 13.5" stroke="#222" stroke-width="4" stroke-linecap="round"/></svg>
<div class="t" style="left:1560.5px;top:589.5px;font-size:21.5px;color:#555">30</div>

<!-- 資材 -->
<div class="t" style="left:956px;top:694.5px;font-size:21.5px;color:#333">資材</div>
<div class="a" style="left:1015px;top:681px;width:105px;height:52px;border:1.2px solid #ccc;border-radius:6px;background:#fff"></div>
<svg style="left:1034px;top:695px" width="21" height="21" viewBox="0 0 21 21"><path d="M10.5 0V21M0 10.5H21" stroke="#333" stroke-width="5.5"/></svg>
<div class="t" style="left:1056px;top:695px;font-size:21.5px;color:#333">選択</div>
<div class="t" style="left:1802px;top:693px;font-size:21.5px;color:#333">全て削除</div>
<div class="a" style="left:1896px;top:681px;width:61px;height:52px;border:1.2px solid #ccc;border-radius:6px;background:#fff"></div>
<svg style="left:1917px;top:696px" width="19" height="18" viewBox="0 0 19 18"><path d="M2.5 2.5L16.5 15.5M16.5 2.5L2.5 15.5" stroke="#222" stroke-width="4.6" stroke-linecap="round"/></svg>

<!-- 計画収量 -->
<div class="t" style="left:955.5px;top:773px;font-size:21.5px;color:#333">計画収量</div>
<div class="a" style="left:1058.5px;top:771.5px;width:139px;height:27.5px;border:1px solid #767676;border-radius:3px;background:#fff"></div>
<div class="t" style="left:1065px;top:774px;font-size:21.5px;color:#222">10a当たり</div>
<svg style="left:1176px;top:781px" width="14" height="9" viewBox="0 0 14 9"><path d="M1 1.5L7 7.5L13 1.5" fill="none" stroke="#222" stroke-width="2"/></svg>
<div class="a" style="left:1220px;top:759.5px;width:131px;height:53px;border:1.2px solid #ccc;border-radius:7px;background:#fff"></div>
<div class="t" style="left:1307.5px;top:775px;font-size:21.5px;color:#555">550</div>
<div class="a" style="left:1373px;top:771.5px;width:109.5px;height:27.5px;border:1px solid #767676;border-radius:3px;background:#fff"></div>
<div class="t" style="left:1380px;top:774px;font-size:21.5px;color:#222">kg</div>
<svg style="left:1460px;top:781px" width="14" height="9" viewBox="0 0 14 9"><path d="M1 1.5L7 7.5L13 1.5" fill="none" stroke="#222" stroke-width="2"/></svg>

<!-- 出荷期間 -->
<div class="t" style="left:955.5px;top:853px;font-size:21.5px;color:#333">出荷期間</div>
<svg style="left:1058px;top:852px" width="21" height="21" viewBox="0 0 21 21"><circle cx="10.5" cy="10.5" r="9.2" fill="#fff" stroke="#0075ff" stroke-width="2.2"/><circle cx="10.5" cy="10.5" r="5.8" fill="#0075ff"/></svg>
<div class="t" style="left:1090px;top:853px;font-size:21.5px;color:#333">指定なし</div>
<svg style="left:1226px;top:858px" width="20" height="20" viewBox="0 0 20 20"><circle cx="10" cy="10" r="8.8" fill="#fff" stroke="#767676" stroke-width="1.6"/></svg>
<div class="a" style="left:1257.5px;top:838.5px;width:156px;height:53px;border:1.2px solid #ccc;border-radius:7px;background:#fff"></div>
<svg style="left:1422px;top:858px" width="20" height="9" viewBox="0 0 20 9"><path d="M1 6.5 C3 2 6 1.5 9 4 C12 6.5 15 7.5 19 2.5" fill="none" stroke="#444" stroke-width="1.6"/></svg>
<div class="a" style="left:1454.5px;top:838.5px;width:156px;height:53px;border:1.2px solid #ccc;border-radius:7px;background:#fff"></div>

<!-- 可変施肥進捗 -->
<div class="t" style="left:749px;top:922.5px;font-size:21.5px;color:#333">可変施肥進捗</div>
<div class="t" style="left:955.5px;top:922.5px;font-size:21.5px;color:#333">圃場：</div>
<div class="a" style="left:1021px;top:918px;width:405px;height:33.5px;border:1.2px solid #ccc;border-radius:17px;background:#fff"></div>
<div class="t" style="left:1205px;top:924.5px;font-size:19px;color:#333">0/10</div>
<div class="t" style="left:1438.5px;top:928.5px;font-size:15.6px;color:#999">Powered By</div>
<svg style="left:1528px;top:926px" width="28" height="23" viewBox="0 0 28 23"><ellipse cx="13.6" cy="14" rx="11.2" ry="6.6" transform="rotate(-24 13.6 14)" fill="none" stroke="#1669c1" stroke-width="3.2"/><circle cx="16.8" cy="4" r="3.2" fill="#1669c1"/><path d="M15.5 8 L19 9 L15 20.5 L10.5 21.5Z" fill="#1669c1"/><path d="M12.5 19.5 L14.5 15" stroke="#fff" stroke-width="1"/></svg>

<!-- 籾摺歩合 -->
<div class="t" style="left:749px;top:982px;font-size:21.5px;color:#333">籾摺歩合</div>
<div class="a" style="left:955px;top:978.5px;width:125px;height:52px;border:1.2px solid #ccc;border-radius:7px;background:#fff"></div>
<div class="t" style="left:962.5px;top:994px;font-size:21.5px;color:#555">80</div>
<div class="t" style="left:1088px;top:993px;font-size:21.5px;color:#333">%</div>

<!-- 栽培法 -->
<div class="t" style="left:749px;top:1061.5px;font-size:21.5px;color:#333">栽培法</div>
<div class="a" style="left:955px;top:1057.5px;width:1002px;height:53px;border:1.2px solid #ccc;border-radius:7px;background:#fff"></div>
<div class="t" style="left:962.5px;top:1071.5px;font-size:21.5px;color:#aaa;letter-spacing:-0.45px">栽培法を入力してください。</div>

<!-- annotation box -->
<div class="a" style="left:1836px;top:204px;width:154px;height:88px;border:6px solid #4472c4"></div>
<div class="a" style="left:0;top:1122px;width:2000px;height:3px;background:#000"></div>




</body>
</html>
